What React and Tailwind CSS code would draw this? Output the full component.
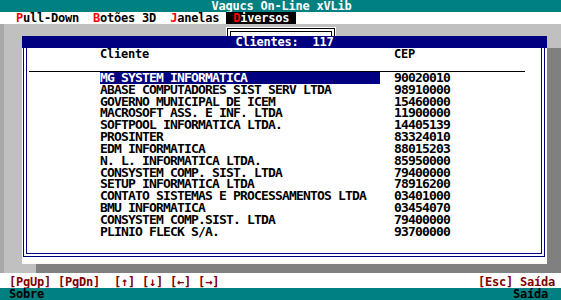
import React from "react";

const clientes = [
  ["MG SYSTEM INFORMATICA", "90020010"],
  ["ABASE COMPUTADORES SIST SERV LTDA", "98910000"],
  ["GOVERNO MUNICIPAL DE ICEM", "15460000"],
  ["MACROSOFT ASS. E INF. LTDA", "11900000"],
  ["SOFTPOOL INFORMATICA LTDA.", "14405139"],
  ["PROSINTER", "83324010"],
  ["EDM INFORMATICA", "88015203"],
  ["N. L. INFORMATICA LTDA.", "85950000"],
  ["CONSYSTEM COMP. SIST. LTDA", "79400000"],
  ["SETUP INFORMATICA LTDA", "78916200"],
  ["CONTATO SISTEMAS E PROCESSAMENTOS LTDA", "03401000"],
  ["BMU INFORMATICA", "03454070"],
  ["CONSYSTEM COMP.SIST. LTDA", "79400000"],
  ["PLINIO FLECK S/A.", "93700000"],
];

const menus = [
  { key: "P", rest: "ull-Down" },
  { key: "B", rest: "otões 3D" },
  { key: "J", rest: "anelas" },
  { key: "D", rest: "iversos", active: true },
];

function App() {
  const selected = 0;

  return (
    <div
      className="flex flex-col w-[561px] h-[300px] overflow-hidden font-bold text-[12px] leading-[12px] tracking-[-0.22px] whitespace-pre"
      style={{ fontFamily: '"DejaVu Sans Mono", "Liberation Mono", monospace' }}
    >
      {/* title */}
      <div className="flex justify-center h-[12px] pl-[2px] bg-[#008080] text-white">
        Vagucs On-Line xVLib
      </div>

      {/* menu */}
      <div className="flex h-[12px] pl-[9px] bg-white text-black">
        {menus.map((m) => (
          <span
            key={m.key}
            className={m.active ? "px-[7px] bg-black text-white" : "px-[7px]"}
          >
            <span className="text-[#ff0000]">{m.key}</span>
            {m.rest}
          </span>
        ))}
      </div>

      {/* desktop */}
      <div className="relative h-[249px] pt-[12px] pl-[22px] bg-[#c0c0c0] border-l-4 border-[#a8a8a8] overflow-hidden">
        {/* dropdown of Diversos, behind the window */}
        <div className="absolute left-[222px] top-[3px] w-[110px] h-[30px] bg-white p-[1px]">
          <div className="h-full border border-black p-[2px]">
            <div className="h-full border border-black" />
          </div>
        </div>

        <div className="relative z-10 -ml-[4px] w-[525px] h-[228px] bg-white shadow-[14px_12px_0_#808080]">
          <div className="flex justify-center h-[12px] bg-[#000080] text-white">
            Clientes:  117
          </div>
          <div className="ml-[1px] mr-[2px] h-[209px] border-x border-b border-[#000080] px-[2px] pb-[2px]">
            <div className="h-full border-x border-b border-[#000080] text-black">
              <div className="flex h-[12px]">
                <span className="ml-[73px] w-[280px]">Cliente</span>
                <span className="ml-[14px]">CEP</span>
              </div>
              <div className="mt-[11px] ml-[2px] w-[496px] h-px bg-black" />
              <div className="text-[13px] leading-[11.83px] tracking-[-0.83px]">
                {clientes.map(([nome, cep], i) => (
                  <div key={i} className="flex h-[11.83px]">
                    <span
                      className={
                        i === selected
                          ? "ml-[73px] w-[280px] bg-[#000080] text-white"
                          : "ml-[73px] w-[280px]"
                      }
                    >
                      {nome}
                    </span>
                    <span className="ml-[14px]">{cep}</span>
                  </div>
                ))}
              </div>
            </div>
          </div>
        </div>
      </div>

      {/* keys */}
      <div className="flex justify-between h-[15px] pt-[3px] pl-[9px] pr-[6px] bg-white text-[#800000]">
        <span>[PgUp] [PgDn]  [↑] [↓] [←] [→]</span>
        <span>[Esc] Saída</span>
      </div>

      {/* status */}
      <div className="flex justify-between h-[12px] pl-[9px] pr-[13px] bg-[#008080] text-black">
        <span>Sobre</span>
        <span>Saída</span>
      </div>
    </div>
  );
}

export default App;
